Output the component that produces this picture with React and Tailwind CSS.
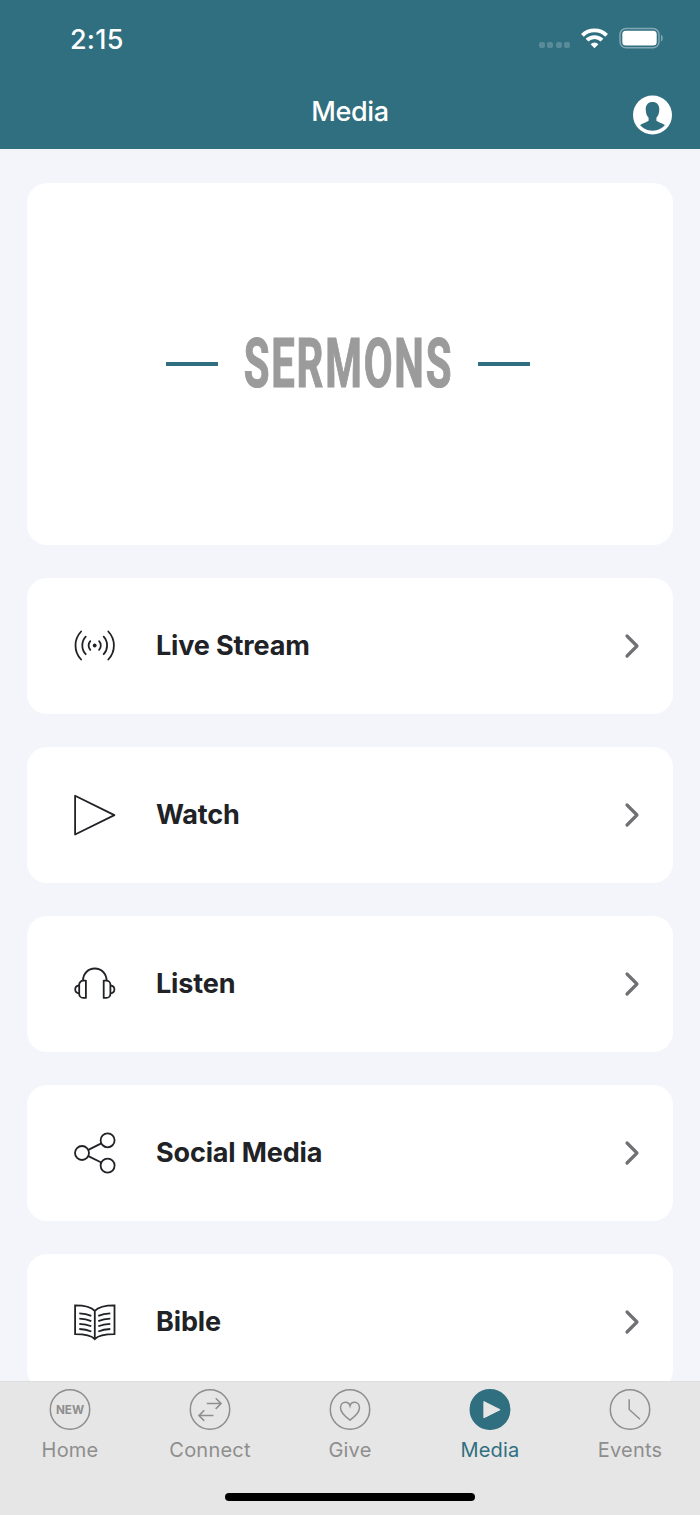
import React from "react";

const LiveIcon = () => (
  <svg width={44} height={44} viewBox="0.3 0.7 44 44" fill="none" stroke="#202226" strokeWidth="1.8" strokeLinecap="round">
    <circle cx={22} cy={22.2} r={1.9} fill="#202226" stroke="none" />
    <path d="M17.6 17.9a6.3 6.3 0 0 0 0 8.6M26.4 17.9a6.3 6.3 0 0 1 0 8.6" />
    <path d="M13 13.4a13 13 0 0 0 0 17.5M31 13.4a13 13 0 0 1 0 17.5" />
    <path d="M8.4 8.2a20.3 20.3 0 0 0 0 28M35.6 8.2a20.3 20.3 0 0 1 0 28" />
  </svg>
);

const WatchIcon = () => (
  <svg width={44} height={44} viewBox="0.4 0 44 44" fill="none" stroke="#202226" strokeWidth="1.8" strokeLinejoin="round">
    <path d="M2.5 2.7v38.8L41.8 22.1z" />
  </svg>
);

const ListenIcon = () => (
  <svg width={44} height={44} viewBox="0.2 0.2 44 44" fill="none" stroke="#202226" strokeWidth="1.8" strokeLinejoin="round">
    <path d="M10.2 18.8C10.2 12 15.3 6.7 22 6.7s11.8 5.3 11.8 12.1" />
    <path d="M13.1 18.8v17.3h-2.7a4 4 0 0 1-4-4v-9.3a4 4 0 0 1 4-4z" />
    <path d="M30.9 18.8v17.3h2.7a4 4 0 0 0 4-4v-9.3a4 4 0 0 0-4-4z" />
    <path d="M6.4 23.6c-2.4.4-4 1.9-4 4s1.6 3.6 4 4M37.6 23.6c2.4.4 4 1.9 4 4s-1.6 3.6-4 4" />
  </svg>
);

const ShareIcon = () => (
  <svg width={44} height={44} viewBox="0 0 44 44" fill="none" stroke="#202226" strokeWidth="1.8">
    <circle cx={9} cy={22} r={7} />
    <circle cx={34.6} cy={9.3} r={7} />
    <circle cx={34.6} cy={34.6} r={7} />
    <path d="M15.3 18.9l13-6.5M15.3 25.1l13 6.4" />
  </svg>
);

const BibleIcon = () => (
  <svg width={44} height={44} viewBox="0.2 -0.5 44 44" fill="none" stroke="#202226" strokeWidth="1.8">
    <path d="M22 10.4C18.5 6.5 11 4.9 2.3 4.9v28.8C11 33.7 18.5 34.8 22 38.6c3.5-3.8 11-4.9 19.7-4.9V4.9C33 4.9 25.5 6.5 22 10.4zM22 10.4v28.2" />
    <path d="M6.5 12.9c4.5.1 8.5.9 12 2.5M6.5 18.1c4.5.1 8.5.9 12 2.5M6.5 23.3c4.5.1 8.5.9 12 2.5M6.5 28.5c4.5.1 8.5.9 12 2.5" />
    <path d="M37.5 12.9c-4.5.1-8.5.9-12 2.5M37.5 18.1c-4.5.1-8.5.9-12 2.5M37.5 23.3c-4.5.1-8.5.9-12 2.5M37.5 28.5c-4.5.1-8.5.9-12 2.5" />
  </svg>
);

const items = [
  { label: "Live Stream", icon: <LiveIcon /> },
  { label: "Watch", icon: <WatchIcon /> },
  { label: "Listen", icon: <ListenIcon /> },
  { label: "Social Media", icon: <ShareIcon /> },
  { label: "Bible", icon: <BibleIcon /> },
];

const tabs = [
  {
    label: "Home",
    icon: (
      <text x={6.4} y={24.7} fontFamily="Inter" fontWeight="700" fontSize="12" textLength="28.2" lengthAdjust="spacingAndGlyphs" fill="currentColor" stroke="none">
        NEW
      </text>
    ),
  },
  { label: "Connect", icon: <path d="M17.3 14.6h14.2M26.2 9.3l5.4 5.3-5.4 5.3M24 26.6H9.5M14.8 21.3l-5.4 5.3 5.4 5.3" /> },
  { label: "Give", icon: <path d="M20.5 31.2C15.8 27.8 11 23.6 11 18.8c0-3.3 2.2-5.6 5-5.6 2.2 0 3.9 1.3 4.5 3.6.6-2.3 2.3-3.6 4.5-3.6 2.8 0 5 2.3 5 5.6 0 4.8-4.8 9-9.5 12.4z" /> },
  { label: "Media", active: true, icon: <path d="M14.4 12.6v16.2l16.2-8.1z" fill="#e6e6e6" stroke="#e6e6e6" strokeWidth="1" strokeLinejoin="round" /> },
  { label: "Events", icon: <path d="M19.7 10.2v10.3l10.8 9.7" /> },
];

const StatusBar = () => (
  <div className="h-[76px] flex justify-between pl-[70px] pr-[35px] pt-[22px]">
    <div className="text-[27px] leading-[35px] font-medium tracking-[0.2px]">2:15</div>
    <div className="flex pt-[5px]">
      <div className="flex gap-[2.5px] pt-[15px]">
        <div className="size-[6px] rounded-[2px] bg-white/20" />
        <div className="size-[6px] rounded-[2px] bg-white/20" />
        <div className="size-[6px] rounded-[2px] bg-white/20" />
        <div className="size-[6px] rounded-[2px] bg-white/20" />
      </div>
      <svg className="ml-[11px] mt-px" width={27} height={21} viewBox="0 0 27 21" fill="none" stroke="white" strokeWidth="3.9">
        <path d="M1.4 7.3a17.3 17.3 0 0 1 24.2 0M6 12.2a10.7 10.7 0 0 1 15 0" />
        <path d="M13.5 20.3l-3.9-4.1a5.6 5.6 0 0 1 7.8 0z" fill="white" stroke="none" />
      </svg>
      <svg className="ml-[11px]" width={46} height={22} viewBox="0 -0.6 46 22" fill="none">
        <rect x={1} y={0.8} width={39} height={19.4} rx={6} stroke="white" strokeOpacity="0.4" strokeWidth="1.5" />
        <rect x={3.3} y={3.1} width={34.4} height={14.8} rx={3.5} fill="white" />
        <path d="M42 7.2c2.3.7 2.3 6 0 6.7z" fill="white" fillOpacity="0.4" />
      </svg>
    </div>
  </div>
);

const App = () => {
  return (
    <div className="h-[1515px] w-[700px] flex flex-col overflow-hidden bg-[#f3f5fa] font-['Inter',sans-serif]">
      <header className="h-[149px] shrink-0 bg-[#306f80] text-white">
        <StatusBar />
        <div className="grid grid-cols-[1fr_auto_1fr] px-7">
          <div />
          <div className="text-[27px] leading-[34px] font-medium tracking-[-0.4px] pt-[19px]">Media</div>
          <svg className="justify-self-end mt-[19px]" width={39} height={40} viewBox="0 0 39 40">
            <circle cx={19.5} cy={20} r={19.5} fill="white" />
            <path
              d="M19.5 6.9c-4.2 0-6.8 2.7-6.8 7.1 0 4.5 1.3 7 2.9 8.8v2.9c-1.8 1.6-5.6 2.3-8.5 4.3C9.8 33.400 14.200 35.700 19.500 35.700s9.700-2.300 12.400-5.700c-2.900-2-6.700-2.700-8.500-4.300v-2.900c1.600-1.800 2.900-4.300 2.900-8.800 0-4.400-2.600-7.100-6.800-7.100z"
              fill="#306f80"
            />
          </svg>
        </div>
      </header>

      <main className="flex-1 min-h-0 overflow-hidden flex flex-col gap-[33.5px] px-[27px] pt-[33.5px]">
        <div className="h-[362px] shrink-0 rounded-[20px] bg-white flex items-center justify-center pr-1">
          <div className="h-1 w-[52px] bg-[#306f80]" />
          <div className="w-[260px] flex justify-center">
            <div className="font-['Roboto'] font-bold text-[68px] leading-none tracking-[3px] text-[#9b9b9b] scale-x-[0.615] [-webkit-text-stroke:1.2px_#9b9b9b]">
              SERMONS
            </div>
          </div>
          <div className="h-1 w-[52px] bg-[#306f80]" />
        </div>
        {items.map((item) => (
          <div key={item.label} className="h-[135.5px] shrink-0 rounded-[20px] bg-white flex items-center pl-[46px] pr-[33px]">
            {item.icon}
            <div className="ml-[39px] flex-1 text-[27px] leading-[34px] font-[650] tracking-[-0.15px] text-[#202226]">{item.label}</div>
            <svg width={16} height={26} viewBox="0.5 0 16 26" fill="none" stroke="#6f7175" strokeWidth="3.2" strokeLinecap="round" strokeLinejoin="round">
              <path d="M3.5 3l10 10-10 10" />
            </svg>
          </div>
        ))}
      </main>

      <nav className="h-[134px] shrink-0 border-t border-[#dedede] bg-[#e6e6e6]">
        <div className="grid grid-cols-5 pt-[7px]">
          {tabs.map((tab) => (
            <div key={tab.label} className={"flex flex-col items-center " + (tab.active ? "text-[#306f80]" : "text-[#8e8e8e]")}>
              <svg width={42} height={41} viewBox="-0.5 0 42 41" fill="none" stroke="currentColor" strokeWidth="1.5">
                <circle cx={20.5} cy={20.5} r={19.7} fill={tab.active ? "currentColor" : "none"} />
                {tab.icon}
              </svg>
              <div className="mt-2 text-[20px] leading-6 tracking-[0.2px]">{tab.label}</div>
            </div>
          ))}
        </div>
        <div className="mx-auto mt-[31px] h-2 w-[250px] rounded-full bg-black" />
      </nav>
    </div>
  );
};

export default App;
